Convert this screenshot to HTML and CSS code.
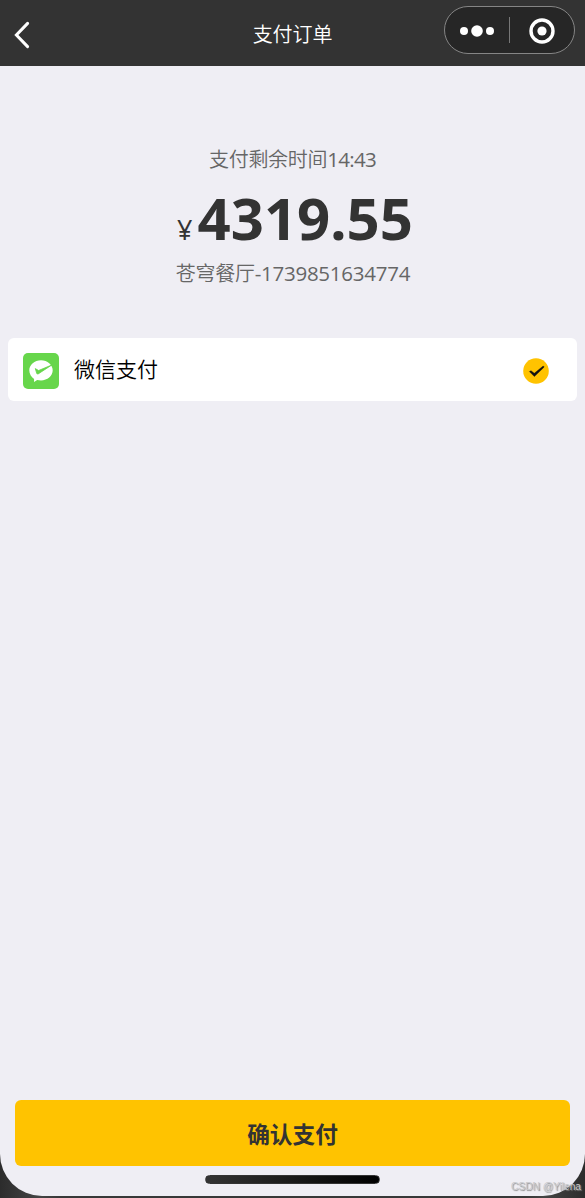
FILE: index.html
```html
<!DOCTYPE html>
<html lang="zh-CN">
<head>
<meta charset="utf-8">
<title>支付订单</title>
<link rel="stylesheet" href="styles.css">
</head>
<body>
<div class="device">
  <main class="screen">
    <header class="navbar">
      <svg class="back" width="16" height="28" viewBox="0 0 16 28"><path d="M13.600 2.400 2.400 14l11.200 11.600" fill="none" stroke="#fff" stroke-width="3" stroke-linecap="round"/></svg>
      <h1 class="title">支付订单</h1>
      <div class="capsule">
        <svg class="dots" width="34" height="12" viewBox="0 0 34 12" fill="#fff"><circle cx="4" cy="6" r="4"/><circle cx="17" cy="6" r="5.8"/><circle cx="30" cy="6" r="4"/></svg>
        <span class="divider"></span>
        <svg class="close" width="26" height="26" viewBox="0 0 26 26"><circle cx="13" cy="13" r="11" fill="none" stroke="#fff" stroke-width="3.4"/><circle cx="13" cy="13" r="4.6" fill="#fff"/></svg>
      </div>
    </header>
    <section class="summary">
      <p class="countdown">支付剩余时间<span class="clock">14:43</span></p>
      <p class="price"><span class="currency">¥</span><span class="amount">4319.55</span></p>
      <p class="order">苍穹餐厅<span class="number">-1739851634774</span></p>
    </section>
    <section class="method">
      <svg class="wechat" width="36" height="36" viewBox="0 0 36 36">
        <rect width="36" height="36" rx="5" fill="#67d64b"/>
        <path d="M18 7.200c6.400 0 11.700 4.500 11.700 10.100S24.400 27.400 18 27.400c-1.300 0-2.600-.2-3.800-.5L11 28.900l.1-3C8.200 24 6.300 20.900 6.300 17.300 6.300 11.700 11.600 7.200 18 7.200Z" fill="#fff"/>
        <path d="M12.300 15.600 15.600 17.500 28.800 12 15.200 20.900Q14.200 21.500 13.700 20.300Z" fill="#67d64b" stroke="#67d64b" stroke-width=".8" stroke-linejoin="round"/>
      </svg>
      <span class="method-name">微信支付</span>
      <svg class="checked" width="26" height="26" viewBox="0 0 26 26"><circle cx="13" cy="13" r="12.800" fill="#ffc300"/><path d="M6.400 13.600 8 12.700 11.300 15.300 20.200 8 21.200 9 11.400 18.600Z" fill="#111" stroke="#111" stroke-width=".4" stroke-linejoin="round"/></svg>
    </section>
    <footer class="footer">
      <button class="confirm">确认支付</button>
      <div class="home-bar"></div>
    </footer>
  </main>
  <span class="watermark">CSDN @Yilena</span>
</div>
</body>
</html>
```
FILE: styles.css
```css
* { box-sizing: border-box; }
body, h1, p { margin: 0; }
body { font-family: "Noto Sans", "Noto Sans CJK SC", sans-serif; }
.device {
  position: relative; height: 1198px; padding-bottom: 2px; overflow: hidden;
  background: linear-gradient(90deg, #2c2c2c, #444 40px, #383838 60px, #383838 525px, #444 545px, #2c2c2c);
}
.screen {
  display: flex; flex-direction: column; height: 1196px;
  background: #efeef4; border-radius: 0 0 42px 42px; overflow: hidden;
}
.navbar {
  display: grid; grid-template-columns: 1fr auto 1fr; align-items: center;
  flex: none; height: 66px; padding: 0 10px 0 14px; background: #333;
}
.back { margin-top: 4px; }
.title {
  font: 350 20px/30px "Noto Sans CJK SC DemiLight", "Noto Sans CJK SC", sans-serif; letter-spacing: -0.1px;
  color: #fff; margin: 1px 0 0 -4px;
}
.capsule {
  display: flex; align-items: center; justify-self: end;
  width: 131px; height: 48px; margin-top: -6px; padding: 1px 0 0 15px;
  border: 1px solid #858585; border-radius: 24px; background: #262626;
}
.divider { width: 1px; height: 26px; margin: -1px 18.500px 0 15px; background: #777; }
.summary { flex: none; height: 272px; padding-top: 78px; text-align: center; color: #666; }
.countdown, .order {
  height: 30px; font: 350 20px/30px "Noto Sans CJK SC DemiLight", "Noto Sans CJK SC", sans-serif;
  letter-spacing: -0.3px; white-space: nowrap;
}
.order { padding-left: 1px; }
.clock, .number { font-family: "Open Sans", "Noto Sans", sans-serif; font-weight: 400; font-size: 20.5px; }
.clock { letter-spacing: -0.7px; }
.number { letter-spacing: -0.25px; }
.price {
  display: flex; justify-content: center; align-items: baseline;
  height: 84px; padding: 2px 0 0 5px; line-height: 84px; color: #333;
}
.currency { font-family: "Open Sans", sans-serif; font-size: 27px; margin-right: 5px; }
.amount { font-size: 58px; font-weight: 700; }
.method {
  display: flex; align-items: center; flex: none; height: 63px;
  margin: 0 8px; padding: 2px 28px 0 15px; border-radius: 6px; background: #fff;
}
.method-name {
  flex: 1; margin: -5px 0 0 15px; color: #000;
  font: 350 21px/30px "Noto Sans CJK SC DemiLight", "Noto Sans CJK SC", sans-serif;
}
.footer {
  display: flex; flex-direction: column; align-items: center;
  margin-top: auto; padding: 0 15px 12px;
}
.confirm {
  width: 100%; height: 66px; padding: 1px 0 0; border: 0; border-radius: 6px;
  background: #ffc300; color: #333;
  font: 700 22.7px/34px "Noto Sans CJK SC", sans-serif;
}
.home-bar {
  width: 175px; height: 9px; margin-top: 9px; border-radius: 5px;
  background: linear-gradient(90deg, #333, #000); border: 1px solid #333;
}
.watermark {
  position: absolute; right: 4px; bottom: 4px; color: #c9c9cc;
  font: 10.2px/15px "Liberation Sans", sans-serif; text-shadow: 1px 1px 1px #888;
}
```
